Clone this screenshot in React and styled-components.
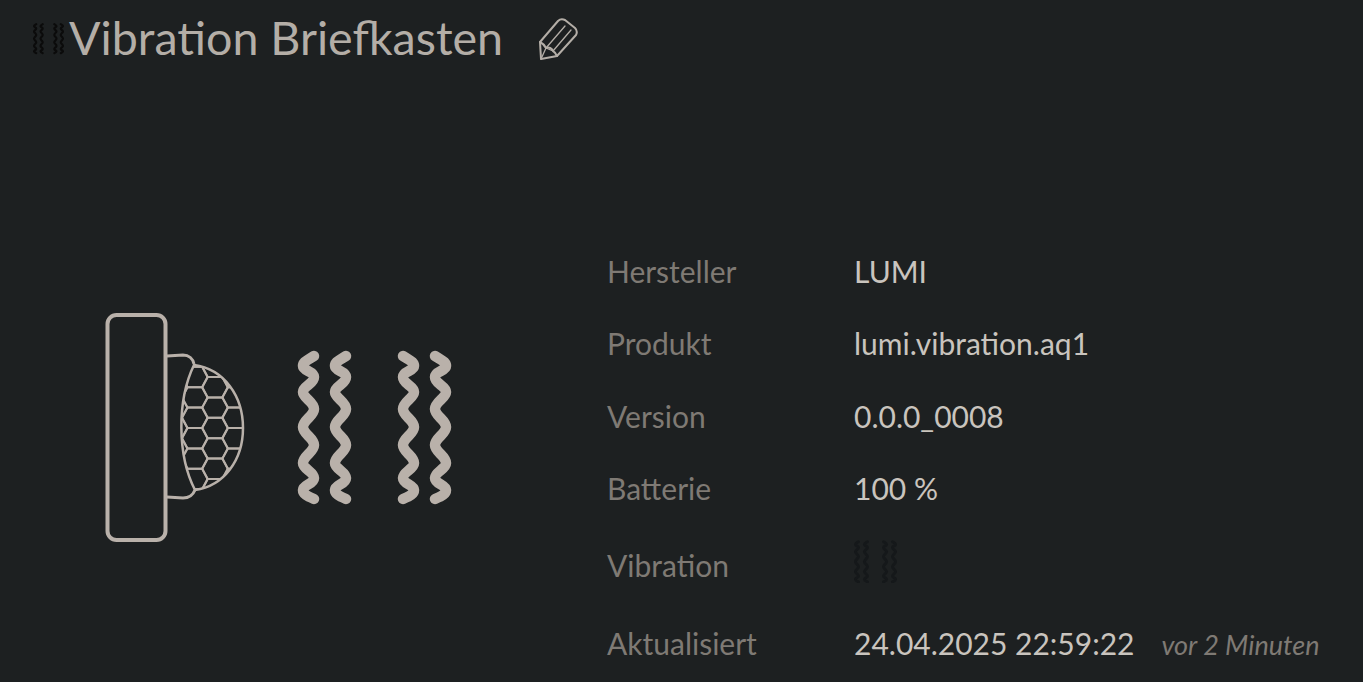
import React from 'react';
import styled, { createGlobalStyle } from 'styled-components';

const GlobalStyle = createGlobalStyle`
  html, body {
    margin: 0;
    height: 100%;
    overflow: hidden;
    background: #1d2021;
  }
`;

const Page = styled.div`
  height: 682px;
  padding: 10px 0 0 33px;
  box-sizing: border-box;
  background: #1d2021;
  color: #bdb7b0;
  font-family: Lato, "Open Sans", sans-serif;
  overflow: hidden;
`;

const Header = styled.header`
  display: flex;
  align-items: center;
  height: 58px;
`;

const Title = styled.h1`
  margin: 0 36px 0 5px;
  padding-bottom: 4px;
  font-size: 46.6px;
  font-weight: 400;
  line-height: 58px;
  color: #b4aea7;
`;

const Content = styled.div`
  display: flex;
  align-items: flex-start;
  margin-top: 167px;
`;

const Figure = styled.div`
  width: 574px;
  padding: 77px 0 0 74px;
  box-sizing: border-box;
`;

const Details = styled.div`
  display: flex;
  flex-direction: column;
`;

const Row = styled.div`
  display: flex;
  align-items: center;
  min-height: ${p => p.$height || 72.2}px;
`;

const Label = styled.div`
  width: 247px;
  font-size: 30px;
  color: #7f7a74;
`;

const Value = styled.div`
  display: flex;
  align-items: baseline;
  font-size: 30px;
  color: #c9c4be;
  white-space: nowrap;
`;

const Ago = styled.span`
  margin-left: 27px;
  font-size: 27px;
  font-style: italic;
  color: #7f7a74;
`;

const WaveSvg = styled.svg`
  display: block;
  flex: none;
  margin-top: ${p => p.$lift ? -7 : 0}px;
`;

const wave = 'M314 356 C306 361 303 362 303 366 C303 371 314 371 314 377 C314 384 303 386 303 392 C303 398 314 402 314 409 C314 416 303 420 303 427 C303 434 314 438 314 445 C314 452 303 456 303 463 C303 469 314 472 314 478 C314 484 303 485 303 490 C303 494 307 496 314 499';

function Waves({ width, color, lift }) {
  return (
    <WaveSvg $lift={lift} width={width} viewBox="298 350 153 155" fill="none" stroke={color} strokeWidth="10.5" strokeLinecap="round">
      <path d={wave} />
      <path d={wave} transform="translate(32 0)" />
      <path d={wave} transform="translate(717 0) scale(-1 1)" />
      <path d={wave} transform="translate(749 0) scale(-1 1)" />
    </WaveSvg>
  );
}

function hexPath(cx, cy) {
  return `M${cx - 13} ${cy} L${cx - 7.5} ${cy - 10.2} L${cx + 7.5} ${cy - 10.2} L${cx + 13} ${cy} L${cx + 7.5} ${cy + 10.2} L${cx - 7.5} ${cy + 10.2} Z`;
}

const hexes = [];
[-2, -1, 0, 1, 2].forEach(col => {
  const even = col % 2 === 0;
  for (let r = -4; r <= 4; r++) {
    hexes.push([215 + col * 20.2, 428 + (even ? r : r + 0.5) * 20.4]);
  }
});

const dome = 'M194 365 C224 369 243 396 243 428 C243 460 224 486 195 490 C177 455 177 400 194 365 Z';

function Device() {
  return (
    <svg width="344" height="232" viewBox="107 312 344 232" fill="none" stroke="#b9b1aa" style={{ display: 'block', overflow: 'visible' }}>
      <rect x="107.5" y="315" width="58" height="225" rx="9" strokeWidth="4" />
      <path d="M167 356 L183 355 C189 355 193 359 194 364 M167 497 L183 498 C189 498 193 495 195 490" strokeWidth="3" />
      <clipPath id="dome-clip"><path d={dome} /></clipPath>
      <g clipPath="url(#dome-clip)" strokeWidth="2">
        {hexes.map(([x, y]) => <path key={`${x}-${y}`} d={hexPath(x, y)} />)}
      </g>
      <path d={dome} strokeWidth="2.5" />
      <g stroke="#b9b1aa" strokeWidth="10.5" strokeLinecap="round">
        <path d={wave} />
        <path d={wave} transform="translate(32 0)" />
        <path d={wave} transform="translate(717 0) scale(-1 1)" />
        <path d={wave} transform="translate(749 0) scale(-1 1)" />
      </g>
    </svg>
  );
}

function Pencil() {
  return (
    <svg width="40" height="42" viewBox="539 19 40 42" fill="none" stroke="#b4aea7" strokeWidth="2" strokeLinejoin="round" strokeLinecap="round">
      <path d="M541 60 L540 43 L558 22 C560 20 563 20 565 21 L575 29 C577 31 577 34 576 36 L557 57 Z" />
      <path d="M540 43 C544 45 545 47 546 49 C549 48 552 49 553 52 C555 53 556 55 557 57" />
      <path d="M546 49 L565 27 M553 52 L571 31" strokeWidth="1.3" />
      <path d="M541 60 L546 49 L553 52" strokeWidth="1.3" />
    </svg>
  );
}

export default function App() {
  return (
    <Page>
      <GlobalStyle />
      <Header>
        <Waves width={31} color="#0b0b0b" />
        <Title>Vibration Briefkasten</Title>
        <Pencil />
      </Header>
      <Content>
        <Figure>
          <Device />
        </Figure>
        <Details>
          <Row><Label>Hersteller</Label><Value>LUMI</Value></Row>
          <Row><Label>Produkt</Label><Value>lumi.vibration.aq1</Value></Row>
          <Row $height={72.8}><Label>Version</Label><Value>0.0.0_0008</Value></Row>
          <Row><Label>Batterie</Label><Value>100 %</Value></Row>
          <Row $height={81}><Label>Vibration</Label><Value><Waves width={43} color="#15181a" lift /></Value></Row>
          <Row $height={75}><Label>Aktualisiert</Label><Value>24.04.2025 22:59:22<Ago>vor 2 Minuten</Ago></Value></Row>
        </Details>
      </Content>
    </Page>
  );
}
